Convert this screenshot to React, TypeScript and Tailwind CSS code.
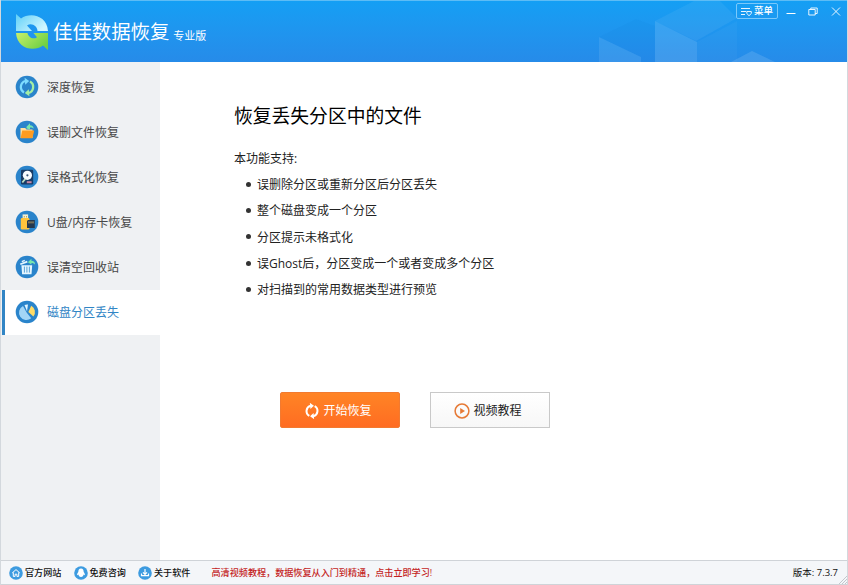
import type { ReactNode } from "react";

interface NavItem {
  label: string;
  icon: ReactNode;
}

function Cycle({ top, bottom }: { top: string; bottom: string }) {
  return (
    <g fill="none" strokeWidth="2.3">
      <path d="M9 17.4A6.2 6.2 0 0 1 10.5 6" stroke={top} />
      <path d="M15 6.6A6.2 6.2 0 0 1 13.5 18" stroke={bottom} />
      <path d="M9.6 2.8l4.6 3.2-4 3.7z" fill={top} stroke="none" />
      <path d="M14.4 21.2l-4.6-3.2 4-3.7z" fill={bottom} stroke="none" />
    </g>
  );
}

function Disc({ children }: { children: ReactNode }) {
  return (
    <svg viewBox="0 0 24 24" className="mb-px size-6 shrink-0">
      <circle cx="12" cy="12" r="11.3" fill="#2a84cb" />
      {children}
    </svg>
  );
}

const NAV: NavItem[] = [
  {
    label: "深度恢复",
    icon: <Cycle top="#7edcff" bottom="#a4eea4" />,
  },
  {
    label: "误删文件恢复",
    icon: (
      <>
        <path d="M5.5 8h4.7l1.3 1.5h6V18h-12z" fill="#ffe0a0" />
        <path d="M7.2 10.6h12L17.4 18.2H5.6z" fill="#ff9c20" />
        <path d="M11.5 8.6V6.8L15 3.2v2c2.4 0 3.6 1.2 3.6 3.6-1-1-2-1.4-3.6-1.2v1.6z" fill="#77e6ae" />
      </>
    ),
  },
  {
    label: "误格式化恢复",
    icon: (
      <>
        <rect x="6" y="4.8" width="12.2" height="14.6" rx="1.2" fill="#173c67" />
        <circle cx="12.4" cy="10.3" r="4.6" fill="#f7fbff" />
        <circle cx="12.4" cy="10.3" r="1.1" fill="#385776" />
        <path d="M7.3 17.5l3-3.6" stroke="#b9dbc2" strokeWidth="1.8" />
        <rect x="11.8" y="16.2" width="4.8" height="2" fill="#c688a6" />
      </>
    ),
  },
  {
    label: "U盘/内存卡恢复",
    icon: (
      <>
        <rect x="7.6" y="4.4" width="5.5" height="5" fill="#f5efcf" />
        <path d="M8.8 6h1v1.4h-1zM11 6h1v1.4h-1z" fill="#b6a565" />
        <rect x="5.8" y="8" width="8.6" height="11.4" rx="1.2" fill="#ffc43c" />
        <path d="M13 10h6.8v8h-7.8v-7z" fill="#24384f" />
        <path d="M14 11.4v2M16 11.4v2M18 11.4v2" stroke="#f2c66c" strokeWidth=".8" />
      </>
    ),
  },
  {
    label: "误清空回收站",
    icon: (
      <>
        <path d="M6.4 10.3h10.8l-.7 9H7.1z" fill="#e5f6ff" />
        <path d="M9.4 11.6v6M11.9 11.6v6M14.4 11.6v6" stroke="#5aa3d6" strokeWidth="1" />
        <path d="M5 8.6l7-2.8.6 1.6-7 2.7z" fill="#e5f6ff" />
        <path d="M6.8 6.6l3-1.2" stroke="#e5f6ff" strokeWidth="1.4" />
        <path d="M12.8 7.2l3.6-3.4v1.9c2.4 0 3.6 1.2 3.6 3.8-1-1.2-2-1.7-3.6-1.6v1.7z" fill="#77e6ae" />
      </>
    ),
  },
  {
    label: "磁盘分区丢失",
    icon: (
      <>
        <path d="M11.6 12.6L8 6a7.4 7.4 0 1 0 8.2 12.2z" fill="#a3d5f6" />
        <path d="M12 11.2L9.5 5a7 7 0 0 1 3.5-.5z" fill="#e0f4ff" />
        <path d="M13.4 12l2.8-6.2a7 7 0 0 1 2.2 10.6z" fill="#ffdc68" />
      </>
    ),
  },
];

const FEATURES = [
  "误删除分区或重新分区后分区丢失",
  "整个磁盘变成一个分区",
  "分区提示未格式化",
  "误Ghost后，分区变成一个或者变成多个分区",
  "对扫描到的常用数据类型进行预览",
];

const ACTIVE = "磁盘分区丢失";

function Logo() {
  return (
    <svg viewBox="0 0 36 38" className="h-[38px] w-9 shrink-0">
      <defs>
        <linearGradient id="logo-top" x1="0" y1="0" x2="1" y2="0.6">
          <stop offset="0" stopColor="#5fd0f8" />
          <stop offset="1" stopColor="#d0f6ff" />
        </linearGradient>
        <linearGradient id="logo-bottom" x1="0" y1="0" x2="1" y2="0.6">
          <stop offset="0" stopColor="#c9f06a" />
          <stop offset="1" stopColor="#6fd044" />
        </linearGradient>
      </defs>
      <path
        d="M1 1l5 4.4C15-1.2 32 2 33 18H22.5c0-5-6-9-10.5-5.6l5 5.6H1z"
        fill="url(#logo-top)"
      />
      <path
        d="M33 37l-5-4.4C19 39.2 2 36 1 20h11.5c1 4.4 5.6 7 9.5 4.2L18.5 20H33z"
        fill="url(#logo-bottom)"
      />
    </svg>
  );
}

function Header() {
  return (
    <header className="relative flex h-[62px] shrink-0 justify-between border-t border-[#5dbcf5] bg-linear-to-b from-[#149ff4] to-[#268be9] text-white">
      <svg viewBox="1 0 268 61" className="absolute top-0 right-0 h-[61px] w-[268px]">
        <path d="M77 20L116 0h26l17 17-41 23z" fill="#fff" fillOpacity=".06" />
        <path d="M77 20l42 21v20H77z" fill="#fff" fillOpacity=".12" />
        <path d="M119 41l40-21v41h-40z" fill="#fff" fillOpacity=".03" />
        <path d="M21 36l42 20v5H21z" fill="#fff" fillOpacity=".09" />
        <path d="M21 36l37-18 19 7v36H63v-5z" fill="#0868cc" fillOpacity=".05" />
        <path d="M153 61l21-11 23 11z" fill="#fff" fillOpacity=".12" />
      </svg>
      <div className="flex items-center pl-3.5">
        <Logo />
        <h1 className="ml-0.5 text-[19.4px] leading-none whitespace-nowrap">佳佳数据恢复</h1>
        <span className="mt-2 ml-1 text-[11px] leading-none whitespace-nowrap">专业版</span>
      </div>
      <div className="relative mt-0.5 mr-1.5 flex h-4 items-center">
        <button className="flex h-4 w-[42px] items-center justify-center gap-0.5 rounded-xs border border-[#7ac9fb] text-[9.5px] leading-none font-medium whitespace-nowrap">
          <svg viewBox="0 0 11 11" className="size-[11px]" fill="none" stroke="currentColor">
            <path d="M0 2.5h9M0 5.5h5M0 8.5h4" strokeWidth=".9" />
            <path d="M5.8 5.5h4.5v2L8 9.7 5.8 7.5z" strokeWidth=".9" />
          </svg>
          菜单
        </button>
        <svg viewBox="0 0 10 10" className="ml-2 size-2.5" stroke="currentColor">
          <path d="M.5 7.5h9" />
        </svg>
        <svg viewBox="0 0 10 10" className="ml-3 size-2.5" fill="none" stroke="currentColor" strokeWidth=".9">
          <path d="M.8 3.5h6.4V9H.8zM2.8 3.5V2h6.4v5.5h-2" />
        </svg>
        <svg viewBox="0 0 10 10" className="ml-[13px] size-2.5" stroke="currentColor" strokeWidth=".9">
          <path d="M1 1.5l8 8M9 1.5l-8 8" />
        </svg>
      </div>
    </header>
  );
}

function Sidebar() {
  return (
    <nav className="w-[159px] shrink-0 bg-[#eff1f3] pt-[3px]">
      {NAV.map((item) => (
        <a
          key={item.label}
          className={
            item.label === ACTIVE
              ? "ml-px flex h-[45px] items-center gap-2 border-l-[3px] border-[#3185c5] bg-white pl-2.5 text-[#3185c5]"
              : "ml-px flex h-[45px] items-center gap-2 pl-[13px] text-[#484848]"
          }
        >
          <Disc>{item.icon}</Disc>
          <span className="text-xs whitespace-nowrap">{item.label}</span>
        </a>
      ))}
    </nav>
  );
}

function Main() {
  return (
    <main className="flex-1 pt-10 pl-[74px] text-[#222]">
      <h2 className="text-[18.8px] leading-7 text-black">恢复丢失分区中的文件</h2>
      <p className="mt-[19px] text-xs leading-5">本功能支持:</p>
      <ul className="mt-[3px]">
        {FEATURES.map((text) => (
          <li key={text} className="flex h-[26.3px] items-center pl-3 text-xs whitespace-nowrap">
            <span className="mr-1.5 mb-0.5 size-[5px] rounded-full bg-[#333]" />
            {text}
          </li>
        ))}
      </ul>
      <div className="mt-[89px] ml-[46px] flex gap-[30px] text-xs">
        <button className="flex h-9 w-[120px] items-center justify-center gap-[3px] rounded-xs border border-[#f27a30] bg-linear-to-b from-[#ff8425] to-[#ff6c22] pt-0.5 pr-1 text-white">
          <svg viewBox="3 3 18 18" className="size-4">
            <Cycle top="#fff" bottom="#fff" />
          </svg>
          开始恢复
        </button>
        <button className="flex h-9 w-[120px] items-center justify-center gap-[3px] border border-[#c9c9c9] bg-linear-to-b from-white to-[#f7f7f7] pt-0.5 pr-1">
          <svg viewBox="0 0 16 16" className="size-4">
            <circle cx="8" cy="8" r="6.9" fill="none" stroke="#e67a36" strokeWidth="1.5" />
            <path d="M6.2 5l4.8 3-4.8 3z" fill="#e67a36" />
          </svg>
          视频教程
        </button>
      </div>
    </main>
  );
}

const LINKS = [
  {
    label: "官方网站",
    icon: <path d="M3.2 7L7 3.6 10.8 7M4.3 6.4v4h1.8V8.2h1.8v2.2h1.8v-4" fill="none" stroke="#fff" />,
  },
  {
    label: "免费咨询",
    icon: <path d="M7 2.5c-2 0-2.7 1.6-2.7 3.5C3.2 7.3 2.8 8.8 3.4 9.3l1-.7c.3 1.6 1 2.3 2.6 2.3s2.3-.7 2.6-2.3l1 .7c.6-.5.2-2-.9-3.3 0-1.9-.7-3.5-2.7-3.5z" fill="#fff" />,
  },
  {
    label: "关于软件",
    icon: <path d="M7 3v5M5 6.3l2 2 2-2M3.5 7.5v2.2h7V7.5" fill="none" stroke="#fff" strokeWidth="1.2" />,
  },
];

function Footer() {
  return (
    <footer className="relative flex h-[25px] shrink-0 items-center border-y border-[#cfd3d8] bg-[#f4f6f9] pr-[9px] pl-2 text-[9.1px] whitespace-nowrap text-[#111]">
      {LINKS.map((link) => (
        <a key={link.label} className="mr-3 flex w-[52.5px] items-center gap-0.5 font-medium">
          <svg viewBox="0 0 14 14" className="size-3.5 shrink-0">
            <circle cx="7" cy="7" r="6.8" fill="#3d9be0" />
            {link.icon}
          </svg>
          {link.label}
        </a>
      ))}
      <span className="ml-[9px] font-medium text-[#c41f1f]">
        高清视频教程，数据恢复从入门到精通，点击立即学习!
      </span>
      <span className="mt-0.5 ml-auto text-[9.5px]">版本: 7.3.7</span>
      <svg viewBox="0 0 8 8" className="absolute right-0 bottom-0 size-2" stroke="#b6bac0" strokeWidth=".8">
        <path d="M0 8l8-8M3 8l5-5M6 8l2-2" />
      </svg>
    </footer>
  );
}

export default function App() {
  return (
    <div className="flex h-[585px] w-[848px] flex-col overflow-hidden border-x border-[#d3d8dd] bg-white font-['Open_Sans','Noto_Sans_CJK_SC',sans-serif]">
      <Header />
      <div className="flex min-h-0 flex-1">
        <Sidebar />
        <Main />
      </div>
      <Footer />
    </div>
  );
}
